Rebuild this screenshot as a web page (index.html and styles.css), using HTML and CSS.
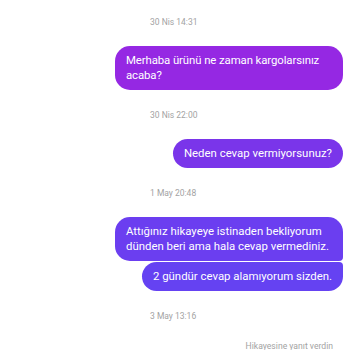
FILE: index.html
```html
<!DOCTYPE html>
<html lang="tr">
<head>
    <meta charset="UTF-8">
    <meta name="viewport" content="width=device-width, initial-scale=1.0">
    <title>Mesajlar</title>
    <link rel="stylesheet" href="styles.css">
</head>
<body>
    <div class="thread">
        <!-- 30 Nis -->
        <div class="stamp">30 Nis 14:31</div>
        <div class="bubble bubble-violet">Merhaba ürünü ne zaman kargolarsınız acaba?</div>

        <div class="stamp">30 Nis 22:00</div>
        <div class="bubble bubble-purple">Neden cevap vermiyorsunuz?</div>

        <!-- 1 May -->
        <div class="stamp">1 May 20:48</div>
        <div class="group">
            <div class="bubble bubble-indigo first">Attığınız hikayeye istinaden bekliyorum dünden beri ama hala cevap vermediniz.</div>
            <div class="bubble bubble-blue last">2 gündür cevap alamıyorum sizden.</div>
        </div>

        <!-- 3 May -->
        <div class="stamp">3 May 13:16</div>
        <div class="note">Hikayesine yanıt verdin</div>
    </div>
</body>
</html>
```

FILE: styles.css
```css
* {
    margin: 0;
    padding: 0;
    box-sizing: border-box;
}

body {
    background: #ffffff;
    font-family: Roboto, 'Noto Sans', sans-serif;
    overflow: hidden;
}

.thread {
    display: flex;
    flex-direction: column;
    padding: 16px 7px 0 0;
}

/* Timestamps */
.stamp {
    margin-left: 150px;
    font-size: 8.5px;
    line-height: 12px;
    color: #a3a3a3;
}

/* Message bubbles */
.bubble {
    align-self: flex-end;
    max-width: 228px;
    margin: 18px 0 19px;
    padding: 7px 11px;
    border-radius: 15px;
    color: #ffffff;
    font-size: 11.4px;
    line-height: 15px;
}

.bubble-violet {
    background: #9528e3;
    letter-spacing: -0.1px;
}
.bubble-purple { background: #7a35ea; }
.bubble-indigo { background: #6b3ef0; }
.bubble-blue { background: #6542f2; }

.group {
    display: flex;
    flex-direction: column;
    gap: 1px;
    margin: 18px 0 19px;
}

.group .bubble {
    margin: 0;
}

.group .first { border-bottom-right-radius: 4px; }
.group .last { border-top-right-radius: 4px; }

/* Story reply note */
.note {
    align-self: flex-end;
    margin: 18px 10px 0 0;
    font-size: 8.6px;
    line-height: 12px;
    color: #a3a3a3;
}
```
